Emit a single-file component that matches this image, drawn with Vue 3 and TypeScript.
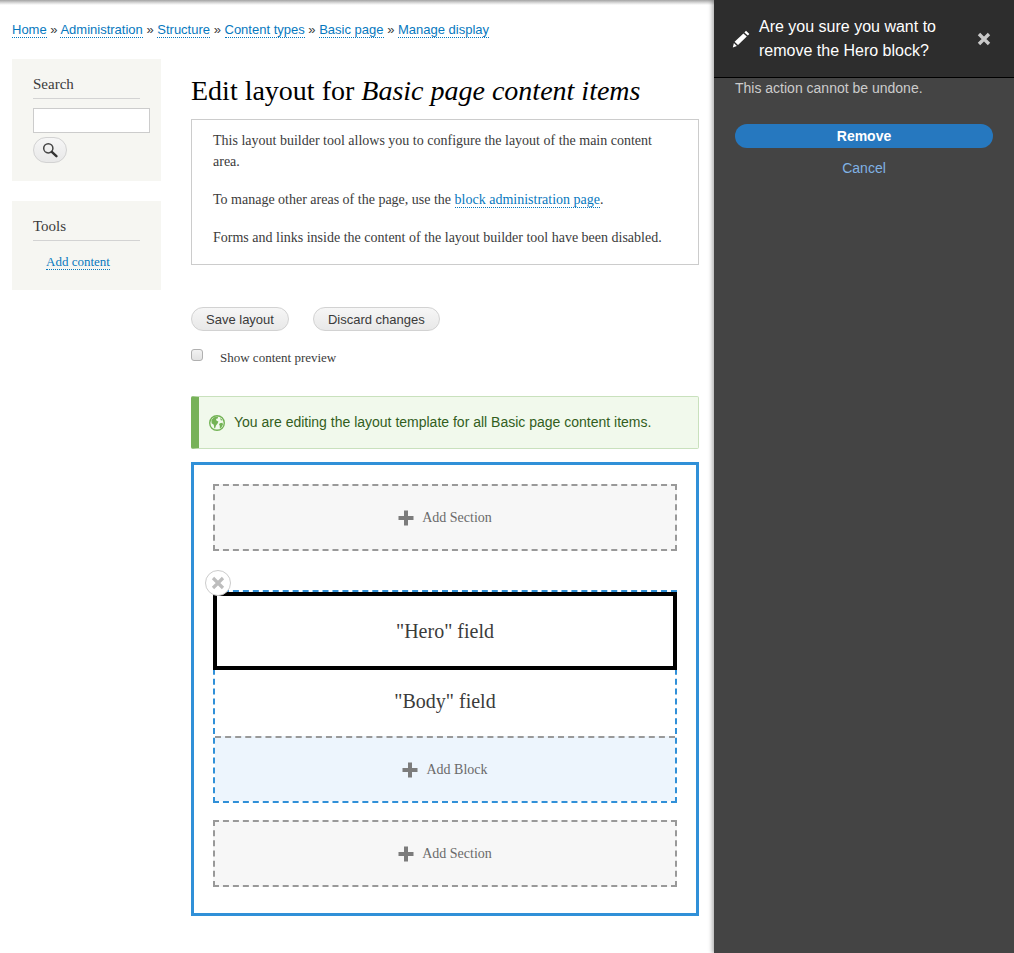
<script setup lang="ts">
const crumbs = ['Home', 'Administration', 'Structure', 'Content types', 'Basic page', 'Manage display']
</script>

<template>
  <div class="shell">
    <div class="page">
      <nav class="breadcrumb">
        <template v-for="(c, i) in crumbs" :key="c">
          <a href="#">{{ c }}</a><span v-if="i < crumbs.length - 1"> » </span>
        </template>
      </nav>
      <div class="columns">
        <aside class="sidebar">
          <section class="block search">
            <h2>Search</h2>
            <input class="search-input" type="text" />
            <button class="search-btn" aria-label="Search">
              <svg width="16" height="16" viewBox="0 0 16 16">
                <circle cx="6.3" cy="6.3" r="4.6" fill="none" stroke="#444" stroke-width="1.5" />
                <path d="M9.8 9.8 L14.4 14.2" stroke="#333" stroke-width="2.4" stroke-linecap="round" />
              </svg>
            </button>
          </section>
          <section class="block tools">
            <h2>Tools</h2>
            <a class="tool-link" href="#">Add content</a>
          </section>
        </aside>
        <main class="content">
          <h1>Edit layout for <em>Basic page content items</em></h1>
          <div class="help">
            <p>This layout builder tool allows you to configure the layout of the main content area.</p>
            <p>To manage other areas of the page, use the <a href="#">block administration page</a>.</p>
            <p>Forms and links inside the content of the layout builder tool have been disabled.</p>
          </div>
          <div class="actions">
            <button class="btn">Save layout</button>
            <button class="btn">Discard changes</button>
          </div>
          <label class="preview"><span class="check"></span><span>Show content preview</span></label>
          <div class="status">
            <svg class="globe" width="16" height="16" viewBox="0 0 16 16">
              <circle cx="8" cy="8" r="7.3" fill="#f1f9ec" stroke="#73b355" stroke-width="1.4" />
              <path d="M2.400 5 L5 2.200 L8.800 1.600 L9 3.200 L7 4 L7.600 5.800 L9.400 6.400 L8.600 8.400 L7 10.400 L6 13.600 L5.200 13 L4.800 9.800 L2.600 8.200 Z M10.800 8.200 L13.400 7.800 L14 9.600 L12.400 12.400 L10.800 13.400 L10.800 10.800 L10 9.600 Z M11 3 L13 4.400 L13.600 5.600 L11.800 5.200 Z" fill="#73b355" />
            </svg>
            <span>You are editing the layout template for all Basic page content items.</span>
          </div>
          <div class="builder">
            <a class="add add-section"><svg class="plus" width="16" height="16" viewBox="0 0 16 16"><path d="M6 .5h4v5.500h5.500v4H10v5.500H6V10H.5V6H6z" fill="#7c7c7c" /></svg><span>Add Section</span></a>
            <div class="section">
              <button class="remove" aria-label="Remove section">
                <svg width="14" height="14" viewBox="0 0 14 14"><path d="M2 2 L12 12 M12 2 L2 12" stroke="#bdbdbd" stroke-width="3.200" /></svg>
              </button>
              <div class="field hero">"Hero" field</div>
              <div class="field body-field">"Body" field</div>
              <a class="add add-block"><svg class="plus" width="16" height="16" viewBox="0 0 16 16"><path d="M6 .5h4v5.500h5.500v4H10v5.500H6V10H.5V6H6z" fill="#7c7c7c" /></svg><span>Add Block</span></a>
            </div>
            <a class="add add-section"><svg class="plus" width="16" height="16" viewBox="0 0 16 16"><path d="M6 .5h4v5.500h5.500v4H10v5.500H6V10H.5V6H6z" fill="#7c7c7c" /></svg><span>Add Section</span></a>
          </div>
        </main>
      </div>
    </div>
    <aside class="tray">
      <header class="tray-head">
        <svg class="pencil" width="18" height="18" viewBox="0 0 18 18">
          <path d="M14 .8 L17.400 4 L15.800 5.600 L12.400 2.400 Z M11.400 3.400 L14.800 6.600 L6 15 L2.600 11.800 Z M1.900 13 L4.900 15.900 L.8 17.400 Z" fill="#fff" />
        </svg>
        <h2>Are you sure you want to remove the Hero block?</h2>
        <svg class="close" width="14" height="14" viewBox="0 0 14 14"><path d="M2 2 L12 12 M12 2 L2 12" stroke="#c9c9c9" stroke-width="3.400" /></svg>
      </header>
      <div class="tray-body">
        <p>This action cannot be undone.</p>
        <button class="remove-btn">Remove</button>
        <a class="cancel" href="#">Cancel</a>
      </div>
    </aside>
  </div>
</template>

<style scoped>
.shell {
  display: flex;
  height: 953px;
  overflow: hidden;
  background: #fff;
  font-family: "Liberation Serif", serif;
  color: #3b3b3b;
}
.page {
  width: 714px;
  flex: none;
  padding: 0 15px 0 12px;
  box-sizing: border-box;
  background: linear-gradient(#a3a3a3, #dedede 3px, #fff 5px);
}
.breadcrumb {
  font: 13px/18px "Liberation Sans", sans-serif;
  padding-top: 21px;
  height: 38px;
  color: #3b3b3b;
}
a {
  color: #0678be;
  text-decoration: none;
}
.breadcrumb a, .tool-link, .help a {
  border-bottom: 1px dotted #0678be;
}
.columns {
  display: flex;
  gap: 30px;
}
.sidebar {
  width: 149px;
  flex: none;
  display: flex;
  flex-direction: column;
  gap: 20px;
}
.block {
  background: #f6f6f2;
  padding: 16px 21px 0;
  box-sizing: border-box;
}
.search { height: 122px; }
.tools { height: 89px; }
.block h2 {
  margin: 0 0 9px;
  width: 107px;
  font-size: 15px;
  font-weight: 400;
  line-height: 18px;
  padding-bottom: 5px;
  border-bottom: 1px solid #d3d3d3;
  color: #3b3b3b;
}
.search-input {
  display: block;
  width: 117px;
  height: 25px;
  box-sizing: border-box;
  border: 1px solid #ccc;
  background: #fff;
  padding: 0;
  margin: 0 0 4px;
}
.search-btn {
  display: flex;
  align-items: center;
  justify-content: center;
  width: 34px;
  height: 26px;
  padding: 0;
  border: 1px solid #d2d2d2;
  border-radius: 13px;
  background: linear-gradient(#f6f6f6, #e8e8e8);
}
.tool-link {
  font-size: 13px;
  line-height: 15px;
  margin-left: 13px;
  display: inline-block;
  margin-top: 4px;
}
.content {
  width: 508px;
  flex: none;
}
h1 {
  margin: 0;
  height: 60px;
  padding-top: 14px;
  box-sizing: border-box;
  font-size: 28px;
  line-height: 36px;
  font-weight: 400;
  color: #000;
  white-space: nowrap;
}
.help {
  border: 1px solid #ccc;
  height: 146px;
  box-sizing: border-box;
  padding: 10px 21px 0;
  font-size: 14px;
  line-height: 21px;
}
.help p { margin: 0 0 17px; }
.actions {
  display: flex;
  gap: 24px;
  margin-top: 42px;
}
.btn {
  height: 24px;
  padding: 0 14px;
  border: 1px solid #d2d2d2;
  border-radius: 12px;
  background: linear-gradient(#f6f6f6, #e8e8e8);
  font: 13px "Liberation Sans", sans-serif;
  color: #3a3a3a;
}
.preview {
  display: flex;
  gap: 17px;
  margin-top: 18px;
  height: 20px;
  font-size: 13px;
  line-height: 18px;
}
.check {
  width: 12px;
  height: 12px;
  box-sizing: border-box;
  border: 1px solid #b0b0b0;
  border-radius: 3px;
  background: linear-gradient(#f2f2f2, #e2e2e2);
  flex: none;
}
.status {
  display: flex;
  align-items: center;
  gap: 9px;
  height: 53px;
  margin-top: 27px;
  box-sizing: border-box;
  padding-left: 10px;
  background: #f1f9ec;
  border: 1px solid #c9e1bd;
  border-left: 8px solid #77b259;
  border-radius: 2px;
  font: 14px "Liberation Sans", sans-serif;
  color: #325e1c;
}
.status span { padding-bottom: 2px; }
.builder {
  margin-top: 13px;
  border: 3px solid #3090d8;
  height: 454px;
  box-sizing: border-box;
  padding: 19px 19px 0;
  display: flex;
  flex-direction: column;
}
.add {
  display: flex;
  align-items: center;
  justify-content: center;
  gap: 8px;
  height: 67px;
  flex: none;
  box-sizing: border-box;
  font-size: 14px;
  color: #6a6a6a;
  border: 2px dashed #999;
  background: #f7f7f7;
}
.section {
  position: relative;
  margin: 39px 0 17px;
  border: 2px dashed #3090d8;
  height: 213px;
  flex: none;
  box-sizing: border-box;
}
.remove {
  position: absolute;
  left: -10px;
  top: -22px;
  width: 26px;
  height: 26px;
  padding: 0;
  border: 1px solid #ccc;
  border-radius: 50%;
  background: #fff;
  display: flex;
  align-items: center;
  justify-content: center;
  z-index: 2;
}
.field {
  display: flex;
  align-items: center;
  justify-content: center;
  font-size: 20px;
  color: #3b3b3b;
  box-sizing: border-box;
}
.hero {
  margin: 0 -2px;
  height: 78px;
  border: 4px solid #000;
  background: #fff;
  position: relative;
}
.body-field {
  height: 66px;
  padding-bottom: 4px;
}
.add-block {
  background: #edf5fd;
  border-width: 2px 0 0;
  height: 65px;
}
.tray {
  width: 300px;
  flex: none;
  background: #444;
  box-shadow: -2px 0 4px rgba(0, 0, 0, .3);
  font-family: "Liberation Sans", sans-serif;
  position: relative;
}
.tray-head {
  display: flex;
  align-items: center;
  height: 78px;
  box-sizing: border-box;
  background: #2d2d2d;
  border-bottom: 1px solid #000;
  padding: 0 23px 0 18px;
}
.tray-head h2 {
  margin: 0 0 0 9px;
  width: 205px;
  font-size: 16px;
  line-height: 24px;
  font-weight: 400;
  color: #fff;
}
.pencil { flex: none; }
.close { margin-left: auto; flex: none; }
.tray-body {
  padding: 0 21px;
  display: flex;
  flex-direction: column;
}
.tray-body p {
  margin: 2px 0 28px;
  font-size: 14px;
  line-height: 16px;
  color: #ccc;
}
.remove-btn {
  height: 24px;
  border: 0;
  border-radius: 12px;
  background: #2678bf;
  color: #fff;
  font: 700 14px "Liberation Sans", sans-serif;
  padding: 0;
}
.cancel {
  margin-top: 12px;
  text-align: center;
  color: #80b2e4;
  font-size: 14px;
  line-height: 16px;
}
</style>
